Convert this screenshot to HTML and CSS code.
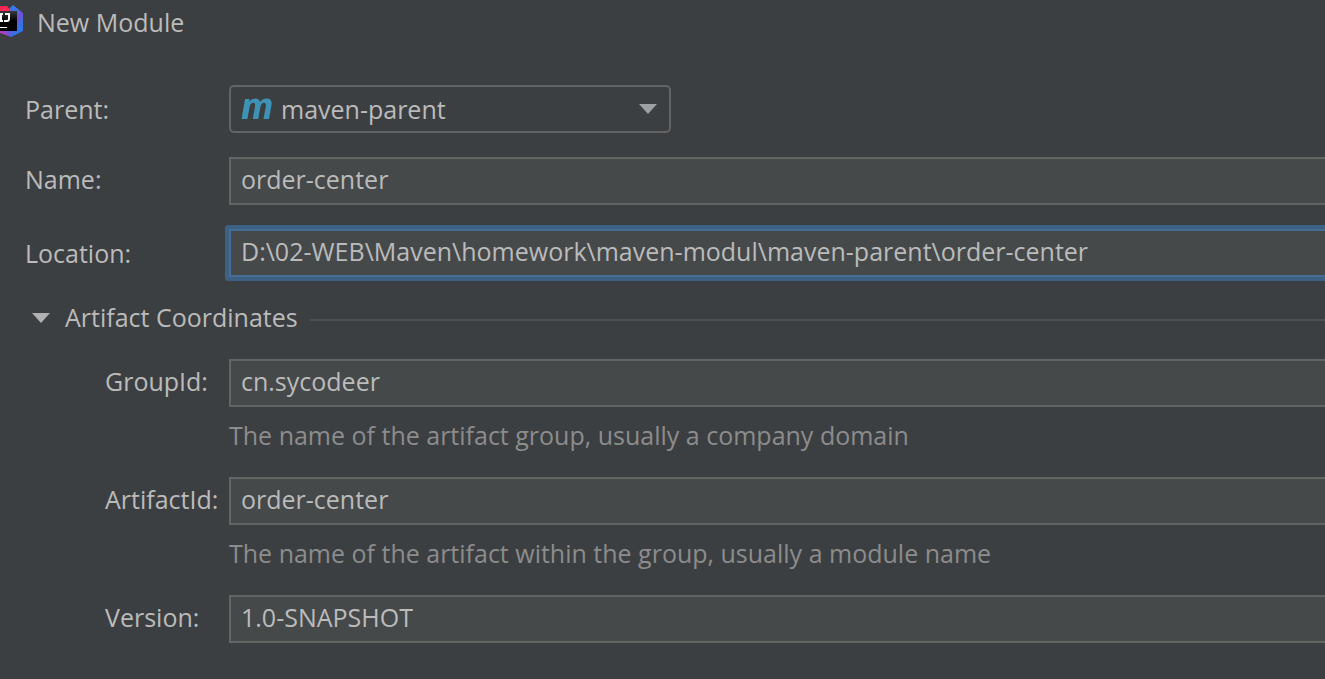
FILE: index.html
```html
<!DOCTYPE html>
<html lang="en">
<head>
<meta charset="utf-8">
<meta name="viewport" content="width=device-width, initial-scale=1">
<title>New Module</title>
<link rel="stylesheet" href="styles.css">
</head>
<body>
<main class="dialog">
  <header class="titlebar">
    <svg class="logo" width="24" height="37" viewBox="0 0 24 37" aria-hidden="true">
      <defs>
        <linearGradient id="edge" x1="0" y1="0" x2="1" y2="1">
          <stop offset="0" stop-color="#2f7df0"/>
          <stop offset=".45" stop-color="#3d74ea"/>
          <stop offset=".6" stop-color="#7250d4"/>
          <stop offset=".78" stop-color="#2f75ea"/>
          <stop offset="1" stop-color="#3b6ae8"/>
        </linearGradient>
        <linearGradient id="plate" x1="0" y1="0" x2="0" y2="1">
          <stop offset="0" stop-color="#3a3a3a"/>
          <stop offset=".5" stop-color="#000"/>
        </linearGradient>
      </defs>
      <path d="M9 9 13 5 23 13V31L11 37 0 32V14z" fill="url(#edge)"/>
      <path d="M0 6H7L11 11H0z" fill="#fe2857"/>
      <path d="M0 31H4L9 36 0 33z" fill="#b03cc4"/>
      <path d="M0 11H17V31H0z" fill="url(#plate)"/>
      <path d="M0 14H3M1 14V21M0 21H3M5 14H10M9 14V18.500Q9 21 7 21H4" fill="none" stroke="#fff" stroke-width="2"/>
      <path d="M0 27.500H7" stroke="#fff" stroke-width="1"/>
    </svg>
    <h1 class="title">New Module</h1>
  </header>
  <form class="form">
    <div class="row">
      <label class="label" for="parent">Parent:</label>
      <div class="combo">
        <select class="combo-select" id="parent"><option>maven-parent</option></select>
        <svg class="combo-icon" width="32" height="24" viewBox="0 0 32 24" aria-hidden="true">
          <path d="M4 2H8.500L8.300 4.500Q11 1.500 14.500 1.500 18.500 1.500 18.800 5 21.500 1.500 25.500 1.500 31.500 1.500 30.500 8L28 22H22.500L24.800 9.500Q25.400 5.800 23.200 5.800 20.400 5.800 19.400 10L17.200 22H11.800L14 9.500Q14.600 5.800 12.400 5.800 9.600 5.800 8.600 10L6.400 22H.6z" fill="#3e93b4"/>
        </svg>
        <svg class="combo-arrow" width="18" height="10" viewBox="0 0 18 10" aria-hidden="true"><path d="M0 0H18L9 10z" fill="#9da0a2"/></svg>
      </div>
    </div>
    <div class="row">
      <label class="label label-raised" for="name">Name:</label>
      <input class="field" id="name" type="text" value="order-center">
    </div>
    <div class="row">
      <label class="label" for="location">Location:</label>
      <input class="field field-focused" id="location" type="text" value="D:\02-WEB\Maven\homework\maven-modul\maven-parent\order-center">
    </div>
    <section class="section">
      <button class="section-toggle" type="button" aria-expanded="true">
        <svg class="chevron" width="18" height="10" viewBox="0 0 18 10" aria-hidden="true"><path d="M0 0H18L9 10z" fill="#afb1b3"/></svg>
        <span class="section-title">Artifact Coordinates</span>
        <span class="rule"></span>
      </button>
      <div class="row">
        <label class="label label-raised label-nested" for="group">GroupId:</label>
        <input class="field" id="group" type="text" value="cn.sycodeer" aria-describedby="group-hint">
        <p class="hint" id="group-hint">The name of the artifact group, usually a company domain</p>
      </div>
      <div class="row">
        <label class="label label-raised label-nested" for="artifact">ArtifactId:</label>
        <input class="field" id="artifact" type="text" value="order-center" aria-describedby="artifact-hint">
        <p class="hint" id="artifact-hint">The name of the artifact within the group, usually a module name</p>
      </div>
      <div class="row">
        <label class="label label-raised label-nested" for="version">Version:</label>
        <input class="field" id="version" type="text" value="1.0-SNAPSHOT">
      </div>
    </section>
  </form>
</main>
</body>
</html>
```
FILE: styles.css
```css
* {
  box-sizing: border-box;
}

body {
  margin: 0;
  min-height: 100vh;
  overflow-x: hidden;
  background: #3c3f41;
  color: #bbbbbb;
  font: 25px/36px "Open Sans", "Noto Sans", sans-serif;
}

.titlebar {
  display: flex;
  align-items: center;
  gap: 13px;
  height: 44px;
}

.logo {
  align-self: flex-start;
  flex: none;
}

.title {
  margin: 0;
  font-size: inherit;
  font-weight: 400;
}

.form {
  display: flex;
  flex-direction: column;
  gap: 24px;
  padding: 41px 0 36px 25px;
}

.row {
  display: grid;
  grid-template-columns: 204px 1fr;
  align-items: center;
}

.label-raised {
  padding-bottom: 4px;
}

.label-nested {
  padding-left: 80px;
}

.field,
.combo-select {
  width: 100%;
  height: 48px;
  margin: 0;
  padding: 0 10px 4px;
  border: 2px solid #646464;
  border-radius: 0;
  outline: none;
  background: #45494a;
  color: inherit;
  font: inherit;
}

.field {
  border-right: 0;
}

.field-focused {
  border-color: #466d94;
  box-shadow: 0 0 0 4px #3d6185;
  border-radius: 1px;
}

.combo {
  display: grid;
  align-items: center;
  max-width: 442px;
}

.combo > * {
  grid-area: 1 / 1;
}

.combo-select {
  appearance: none;
  padding: 0 50px;
  border-radius: 5px;
  background: #3c3f41;
}

.combo-icon {
  margin-left: 12px;
  pointer-events: none;
}

.combo-arrow {
  justify-self: end;
  margin-right: 14px;
  pointer-events: none;
}

.section {
  display: flex;
  flex-direction: column;
  gap: 22px;
}

.section-toggle {
  display: flex;
  align-items: center;
  gap: 12px;
  padding: 0 0 0 7px;
  border: 0;
  background: none;
  color: inherit;
  font: inherit;
}

.chevron {
  margin: 0 3px 2px 0;
}

.section-title {
  margin-top: -2px;
  padding-bottom: 2px;
}

.rule {
  flex: 1;
  height: 2px;
  margin-top: 2px;
  background: #515151;
}

.hint {
  grid-column: 2;
  margin: 10px 0 2px;
  color: #8c8c8c;
}
```
